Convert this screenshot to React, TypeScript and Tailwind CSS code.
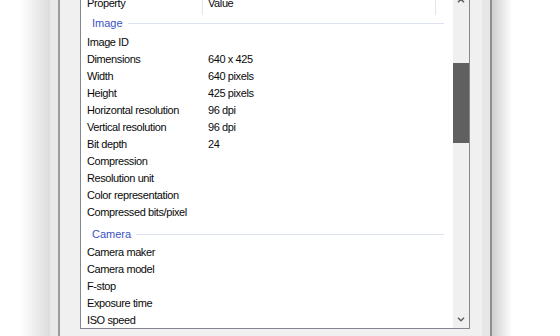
import React from "react";

type Row = { name: string; value?: string };

const imageRows: Row[] = [
  { name: "Image ID" },
  { name: "Dimensions", value: "640 x 425" },
  { name: "Width", value: "640 pixels" },
  { name: "Height", value: "425 pixels" },
  { name: "Horizontal resolution", value: "96 dpi" },
  { name: "Vertical resolution", value: "96 dpi" },
  { name: "Bit depth", value: "24" },
  { name: "Compression" },
  { name: "Resolution unit" },
  { name: "Color representation" },
  { name: "Compressed bits/pixel" },
];

const cameraRows: Row[] = [
  { name: "Camera maker" },
  { name: "Camera model" },
  { name: "F-stop" },
  { name: "Exposure time" },
  { name: "ISO speed" },
];

const PropRow: React.FC<{ row: Row }> = ({ row }) => (
  <div className="flex h-[17px] shrink-0 items-center leading-[13px] tracking-[-0.4px] text-[#0a0a0a]">
    <div className="w-[122px] shrink-0 whitespace-nowrap pl-[6px]">{row.name}</div>
    <div className="whitespace-nowrap pl-[5px]">{row.value}</div>
  </div>
);

const GroupHeader: React.FC<{ label: string; className: string }> = ({ label, className }) => (
  <div className={`flex shrink-0 items-center ${className}`}>
    <span className="pl-[11px] leading-[13px] text-[#3a52c4]">{label}</span>
    <div className="ml-[5px] mr-[9px] h-px flex-1 bg-[#dde3ee]" />
  </div>
);

const Chevron: React.FC<{ up?: boolean }> = ({ up }) => (
  <svg width="8" height="5" viewBox="0 0 8 5" fill="none">
    <path d={up ? "M1 4.2 L4 1.2 L7 4.2" : "M1 0.8 L4 3.8 L7 0.8"} stroke="#606060" strokeWidth="1.5" />
  </svg>
);

export default function App() {
  return (
    <div className="flex h-[336px] w-[560px] overflow-hidden bg-white font-['Liberation_Sans',Arial,sans-serif] text-[11px]">
      {/* left window edge */}
      <div className="w-[50px] shrink-0 bg-linear-to-r from-white from-40% to-[#dcdcdc]" />
      <div className="w-[8px] shrink-0 bg-[#e8e8e8]" />
      <div className="w-[2px] shrink-0 bg-[#9a9a9a]" />
      <div className="w-[20px] shrink-0 bg-[#f0f0f0]" />

      {/* list view */}
      <div className="flex w-[390px] shrink-0 flex-col bg-[#f0f0f0]">
        <div className="flex h-[329px] border-x border-b border-[#828790] bg-white">
          <div className="flex w-[372px] flex-col overflow-hidden">
            {/* column header */}
            <div className="mt-[-9px] flex h-[24px] shrink-0 leading-[13px] tracking-[-0.4px] text-[#0a0a0a]">
              <div className="w-[122px] border-r border-[#e5e5e5] pl-[6px] pt-[6px]">Property</div>
              <div className="w-[233px] border-r border-[#e5e5e5] pl-[5px] pt-[6px]">Value</div>
            </div>

            <GroupHeader label="Image" className="h-[19px] pb-[3px]" />
            {imageRows.map((r) => (
              <PropRow key={r.name} row={r} />
            ))}

            <GroupHeader label="Camera" className="h-[23px] pt-[3px]" />
            {cameraRows.map((r) => (
              <PropRow key={r.name} row={r} />
            ))}
          </div>

          {/* scrollbar */}
          <div className="flex w-[16px] flex-col bg-[#f0f0f0]">
            <div className="flex h-[6px] items-start justify-center">
              <div className="mt-[-2px]">
                <Chevron up />
              </div>
            </div>
            <div className="h-[57px]" />
            <div className="h-[80px] bg-[#606060]" />
            <div className="flex-1" />
            <div className="flex h-[17px] items-center justify-center">
              <Chevron />
            </div>
          </div>
        </div>
      </div>

      {/* right window edge */}
      <div className="w-[12px] shrink-0 bg-[#f0f0f0]" />
      <div className="w-[8px] shrink-0 bg-[#e6e6e6]" />
      <div className="w-[2px] shrink-0 bg-[#8f8f8f]" />
      <div className="w-[20px] shrink-0 bg-linear-to-r from-[#cfcfcf] to-white" />
      <div className="flex-1" />
    </div>
  );
}
